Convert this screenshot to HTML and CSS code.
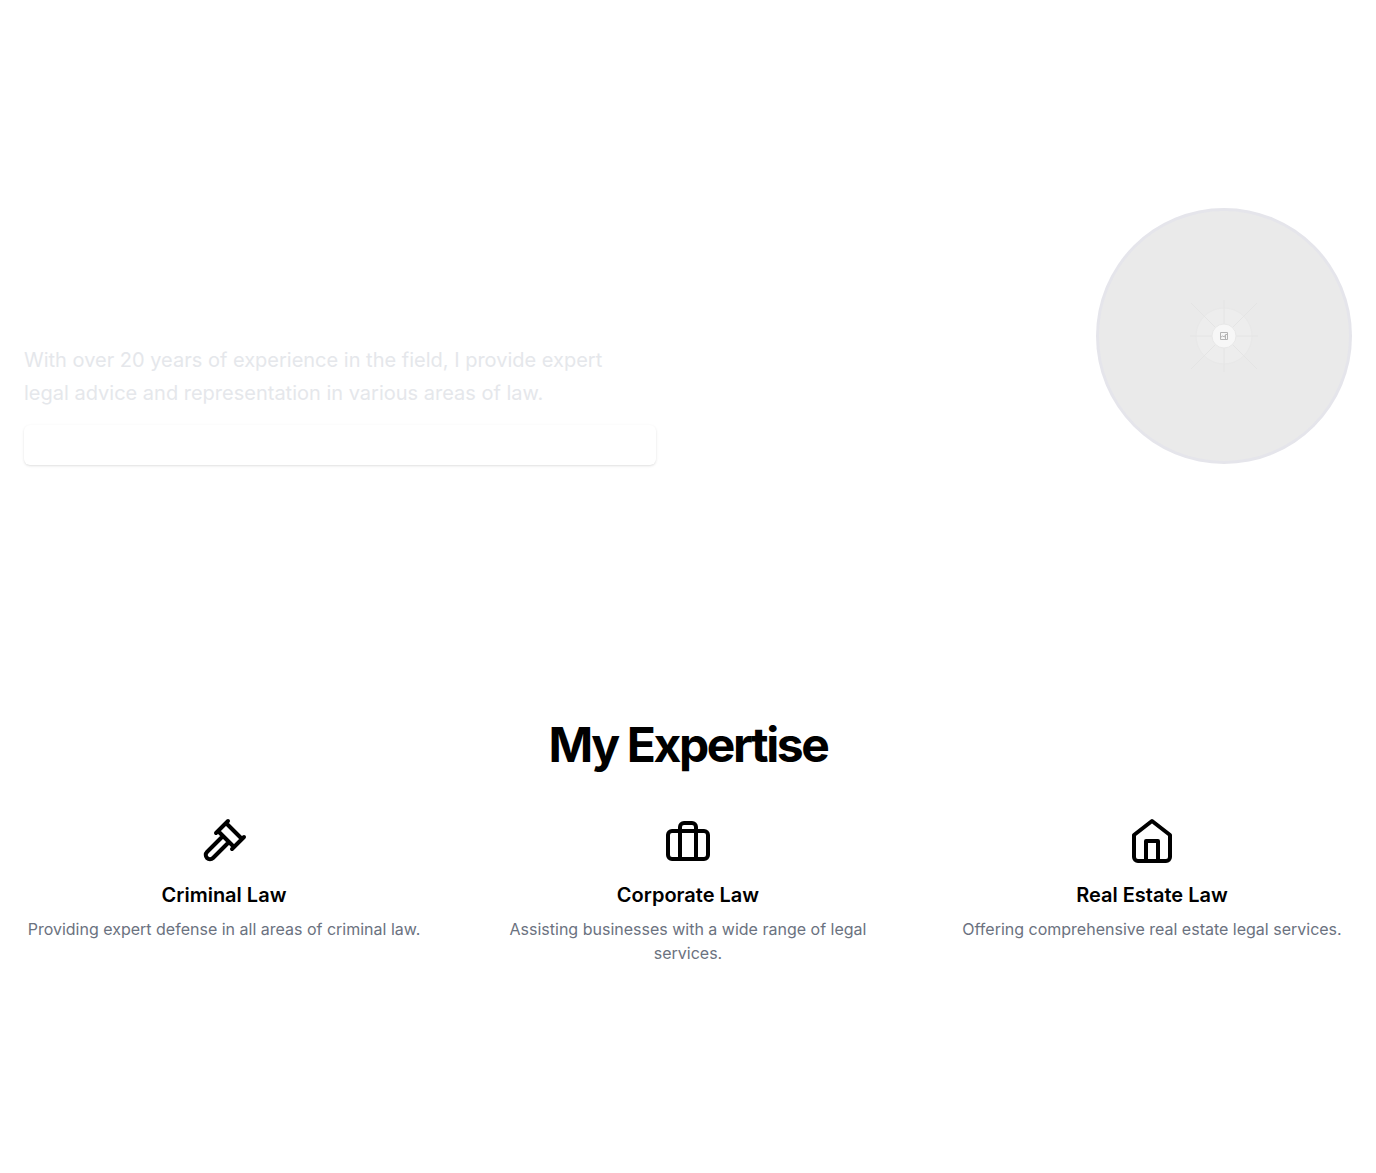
FILE: index.html
```html
<!DOCTYPE html>
<html lang="en">
<head>
<meta charset="utf-8">
<meta name="viewport" content="width=device-width, initial-scale=1">
<title>Lawyer</title>
<link rel="stylesheet" href="styles.css">
</head>
<body>
<header class="site-header"></header>
<main>
  <section class="hero">
    <div class="hero-grid">
      <div class="hero-copy">
        <p class="hero-text">With over 20 years of experience in the field, I provide expert legal advice and representation in various areas of law.</p>
        <button class="hero-button" type="button" aria-label="Contact me"></button>
      </div>
      <svg class="portrait" viewBox="0 0 256 256" fill="none" role="img" aria-label="Portrait">
        <circle cx="128" cy="128" r="128" fill="#e5e5eb"/>
        <circle cx="128" cy="128" r="125" fill="#eaeaea"/>
        <circle cx="128" cy="128" r="28" fill="#ededed" stroke="#e8e8e8"/>
        <path d="M94 128h68M128 92v72M95 95l66 66M161 95l-66 66" stroke="#e4e4e4"/>
        <circle cx="128" cy="128" r="12" fill="#f7f7f7" stroke="#e8e8e8"/>
        <path d="M124.500 124.500h7v7h-7zM124.500 129.500l2-1.500 2 1 1-2.500h2M129.500 127v4" stroke="#b4b4b4"/>
      </svg>
    </div>
  </section>
  <section class="expertise">
    <h2 class="expertise-title">My Expertise</h2>
    <div class="areas">
      <article class="area">
        <svg class="area-icon" viewBox="0 0 24 24" aria-hidden="true"><path d="m14 13-7.500 7.500c-.83.83-2.170.83-3 0a2.120 2.120 0 0 1 0-3L11 10M16 16l6-6M8 8l6-6M9 7l8 8M21 11l-8-8"/></svg>
        <h3 class="area-title">Criminal Law</h3>
        <p class="area-text">Providing expert defense in all areas of criminal law.</p>
      </article>
      <article class="area">
        <svg class="area-icon" viewBox="0 0 24 24" aria-hidden="true"><rect x="2" y="7" width="20" height="14" rx="2"/><path d="M16 21V5a2 2 0 0 0-2-2h-4a2 2 0 0 0-2 2v16"/></svg>
        <h3 class="area-title">Corporate Law</h3>
        <p class="area-text">Assisting businesses with a wide range of legal services.</p>
      </article>
      <article class="area">
        <svg class="area-icon" viewBox="0 0 24 24" aria-hidden="true"><path d="m3 9 9-7 9 7v11a2 2 0 0 1-2 2H5a2 2 0 0 1-2-2zM9 22V12h6v10"/></svg>
        <h3 class="area-title">Real Estate Law</h3>
        <p class="area-text">Offering comprehensive real estate legal services.</p>
      </article>
    </div>
  </section>
</main>
<footer class="site-footer"></footer>
</body>
</html>
```
FILE: styles.css
```css
* {
  box-sizing: border-box;
  margin: 0;
}

body {
  background: #fff;
  color: #000;
  font-family: Inter, "Liberation Sans", sans-serif;
  font-size: 16px;
  font-optical-sizing: none;
  line-height: 24px;
}

.site-header,
.site-footer {
  min-height: 80px;
}

.hero,
.expertise {
  padding: 128px 24px;
}

.hero-grid {
  display: grid;
  grid-template-columns: 1fr 1fr;
  gap: 64px;
  min-height: 257px;
}

.hero-copy {
  display: flex;
  flex-direction: column;
  justify-content: flex-end;
  gap: 15px;
}

.hero-text {
  max-width: 600px;
  color: #e5e7eb;
  font-size: 20px;
  line-height: 33px;
}

.hero-button {
  height: 40px;
  border: 0;
  border-radius: 6px;
  background: #fff;
  box-shadow: 0 1px 3px rgb(0 0 0 / 10%), 0 1px 2px -1px rgb(0 0 0 / 10%);
}

.portrait {
  width: 256px;
  height: 256px;
  justify-self: end;
}

.expertise-title {
  margin-bottom: 48px;
  font-size: 48px;
  font-weight: 700;
  line-height: 48px;
  letter-spacing: -0.05em;
  text-align: center;
}

.areas {
  display: grid;
  grid-template-columns: repeat(3, 1fr);
  gap: 64px;
}

.area {
  display: flex;
  flex-direction: column;
  align-items: center;
  text-align: center;
}

.area-icon {
  width: 48px;
  height: 48px;
  margin-bottom: 16px;
  fill: none;
  stroke: currentColor;
  stroke-width: 2;
  stroke-linecap: round;
  stroke-linejoin: round;
}

.area-title {
  margin-bottom: 8px;
  font-size: 20px;
  font-weight: 600;
  line-height: 28px;
}

.area-text {
  color: #6b7280;
}
```
